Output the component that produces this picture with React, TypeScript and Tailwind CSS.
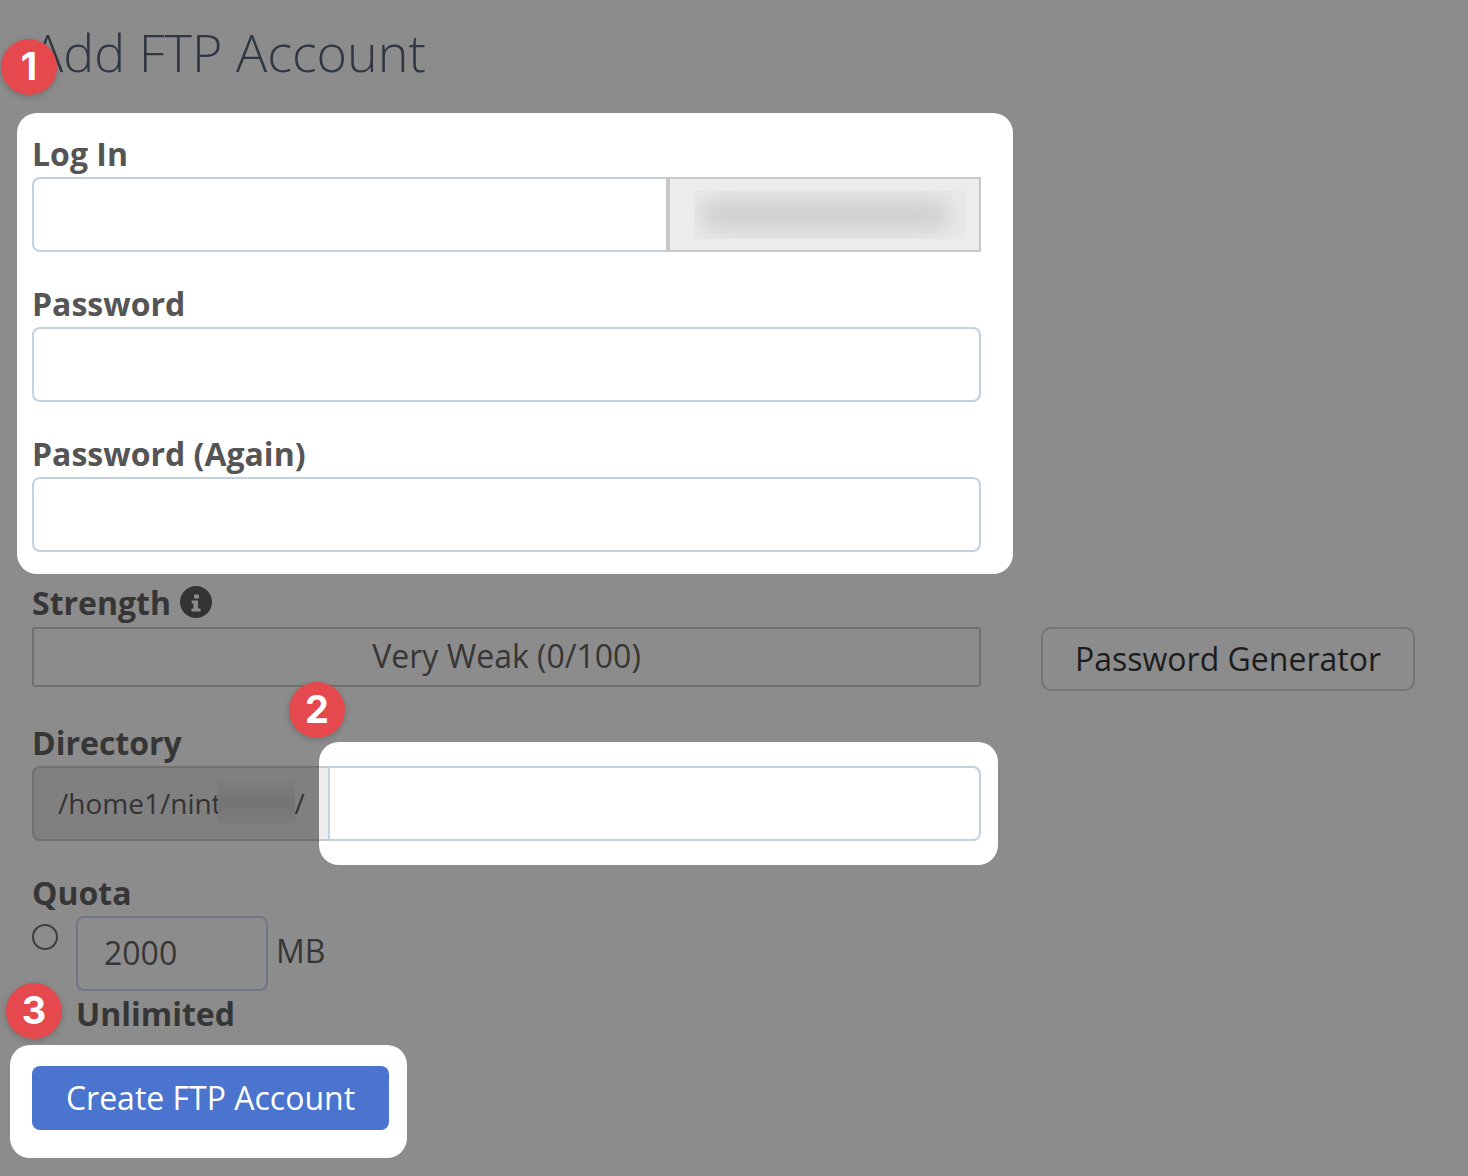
function Badge({ n, className }: { n: number; className: string }) {
  return (
    <div
      className={`absolute flex h-14 w-14 items-center justify-center rounded-full bg-[#e5484d] pb-[2px] font-['Inter',sans-serif] text-[38px] leading-none font-bold text-white shadow-[0_2px_6px_rgba(0,0,0,0.2)] ${className}`}
    >
      {n}
    </div>
  );
}

function FieldLabel({ children, dim }: { children: React.ReactNode; dim?: boolean }) {
  return (
    <label
      className={`flex h-[47px] items-center text-[32px] font-bold ${dim ? "text-[#363636]" : "text-[#555555]"}`}
    >
      {children}
    </label>
  );
}

function TextField() {
  return (
    <input
      type="text"
      className="block h-[75px] w-full rounded-lg border-2 border-[#c3d1df] bg-white outline-none"
    />
  );
}

function InfoIcon() {
  return (
    <svg viewBox="0 0 32 32" className="ml-[9px] h-8 w-8 -translate-y-[1px]">
      <circle cx="16" cy="16" r="16" fill="#333333" />
      <path d="M14 8.5h5v4h-5zM11.5 14.5h6.5v8h2.5v3h-9v-3h2v-5h-1.5z" fill="#8c8c8c" />
    </svg>
  );
}

export default function App() {
  return (
    <div className="relative h-[1176px] w-[1468px] overflow-hidden bg-[#8c8c8c] pl-[32px] font-['Open_Sans',sans-serif]">
      <h1 className="flex h-[113px] items-center pb-[10px] text-[52px] font-light text-[#2f3742]">
        Add FTP Account
      </h1>

      {/* Spotlight 1 */}
      <div className="-ml-[15px] h-[461px] w-[996px] rounded-[20px] bg-white pt-[17px] pr-[32px] pl-[15px]">
        <FieldLabel>Log In</FieldLabel>
        <div className="flex h-[75px]">
          <input
            type="text"
            className="h-full w-[634px] rounded-l-lg border-2 border-r-0 border-[#c3d1df] bg-white outline-none"
          />
          <div className="flex h-full flex-1 items-center border-2 border-l-4 border-[#c8c8c8] bg-[#ececec] pl-[24px]">
            <div className="flex h-[48px] w-[272px] items-center overflow-hidden bg-[#e9e9e9] pl-[6px]">
              <div className="h-[32px] w-[250px] rounded-full bg-[#d0d0d0] blur-[10px]" />
            </div>
          </div>
        </div>
        <div className="mt-[28px]">
          <FieldLabel>Password</FieldLabel>
          <TextField />
        </div>
        <div className="mt-[28px]">
          <FieldLabel>Password (Again)</FieldLabel>
          <TextField />
        </div>
      </div>

      <div className="mt-[6px]">
        <div className="-translate-y-[1px]">
          <FieldLabel dim>
            Strength
            <InfoIcon />
          </FieldLabel>
        </div>
        <div className="flex items-start">
          <div className="flex h-[60px] w-[949px] items-center justify-center rounded-[3px] border-2 border-[#707070] text-[32px] text-[#363636]">
            <span className="-translate-y-[1px]">Very Weak (0/100)</span>
          </div>
          <button className="ml-[60px] h-[64px] w-[374px] rounded-[10px] border-2 border-[#757575] text-[32px] text-[#1d1d1d]">
            Password Generator
          </button>
        </div>
      </div>

      <div className="mt-[28px]">
        <FieldLabel dim>Directory</FieldLabel>
        <div className="flex h-[75px] w-[949px]">
          <div className="flex h-full w-[287px] items-center rounded-l-lg border-2 border-r-0 border-[#717171] bg-[#808080] pb-[2px] pl-[24px] text-[28px] whitespace-nowrap text-[#333333]">
            /home1/nint
            <span className="-ml-[4px] h-[46px] w-[77px] bg-gradient-to-b from-[#7e7e7e] via-[#747474] to-[#7e7e7e]" />
            <span>/</span>
          </div>
          {/* Spotlight 2 */}
          <div className="-my-[24px] -mr-[17px] flex h-[123px] flex-1 rounded-[20px] bg-white py-[24px] pr-[17px]">
            <div className="w-[9px] border-y-2 border-[#c8c8c8] bg-[#ececec]" />
            <input
              type="text"
              className="h-full flex-1 rounded-r-lg border-2 border-[#c3d1df] bg-white outline-none"
            />
          </div>
        </div>
      </div>

      <div className="mt-[28px]">
        <FieldLabel dim>Quota</FieldLabel>
        <div className="flex items-start">
          <span className="mt-[8px] h-[26px] w-[26px] rounded-full border-2 border-[#3d3d3d]" />
          <div className="ml-[18px] flex h-[75px] w-[192px] items-center rounded-lg border-2 border-[#6f7784] pb-[2px] pl-[26px] text-[32px] text-[#363636]">
            2000
          </div>
          <span className="mt-[11px] ml-[8px] text-[32px] text-[#363636]">MB</span>
        </div>
        <div className="-mt-[1px] pl-[44px]">
          <FieldLabel dim>Unlimited</FieldLabel>
        </div>
      </div>

      {/* Spotlight 3 */}
      <div className="mt-[8px] -ml-[22px] w-[397px] rounded-[20px] bg-white pt-[21px] pr-[18px] pb-[28px] pl-[22px]">
        <button className="h-[64px] w-[357px] rounded-lg bg-[#4a74cd] text-[32px] text-white">
          Create FTP Account
        </button>
      </div>

      <Badge n={1} className="top-[39px] left-[1px]" />
      <Badge n={2} className="top-[682px] left-[289px]" />
      <Badge n={3} className="top-[983px] left-[6px]" />
    </div>
  );
}
